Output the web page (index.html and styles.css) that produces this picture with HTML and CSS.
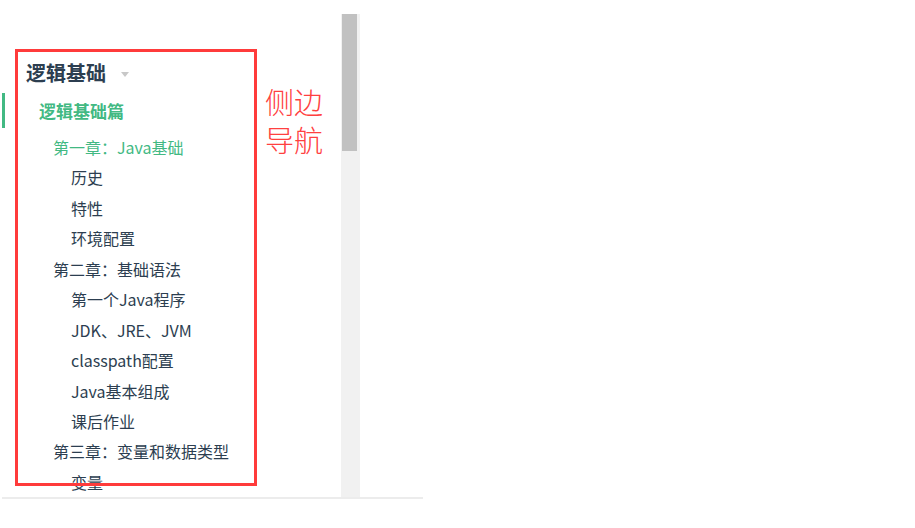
FILE: index.html
```html
<!DOCTYPE html>
<html lang="zh">
<head>
<meta charset="utf-8">
<title>侧边导航</title>
<link rel="stylesheet" href="styles.css">
</head>
<body>
<div class="frame">
  <nav class="sidebar">
    <div class="group-title">逻辑基础<span class="arrow"></span></div>
    <a class="group-link active">逻辑基础篇</a>
    <ul class="nav-list">
      <li class="chapter current">第一章：Java基础</li>
      <li class="item">历史</li>
      <li class="item">特性</li>
      <li class="item">环境配置</li>
      <li class="chapter">第二章：基础语法</li>
      <li class="item">第一个Java程序</li>
      <li class="item">JDK、JRE、JVM</li>
      <li class="item">classpath配置</li>
      <li class="item">Java基本组成</li>
      <li class="item">课后作业</li>
      <li class="chapter">第三章：变量和数据类型</li>
      <li class="item">变量</li>
    </ul>
  </nav>
  <div class="scrollbar"><div class="thumb"></div></div>
</div>
<div class="annotation-box"></div>
<div class="annotation-text">侧边<br>导航</div>
</body>
</html>
```

FILE: styles.css
```css
html, body {
  margin: 0;
  padding: 0;
  background: #fff;
}
body {
  font-family: "Noto Sans CJK SC", "Noto Sans", sans-serif;
  color: #2c3e50;
  position: relative;
  width: 915px;
  height: 528px;
  overflow: hidden;
}
.frame {
  margin: 14px 0 0 2px;
  width: 421px;
  height: 483px;
  border-bottom: 2px solid #ececec;
  display: flex;
}
.sidebar {
  width: 339px;
  height: 483px;
  overflow: hidden;
  padding-top: 44px;
  box-sizing: border-box;
}
.scrollbar {
  width: 19px;
  height: 483px;
  background: #f1f1f1;
}
.thumb {
  margin-left: 1px;
  width: 15px;
  height: 137px;
  background: #c1c1c1;
}
.group-title {
  font-size: 20px;
  font-weight: 700;
  line-height: 30px;
  height: 30px;
  padding-left: 24px;
  display: flex;
  align-items: center;
}
.arrow {
  display: inline-block;
  width: 0;
  height: 0;
  border-left: 4px solid transparent;
  border-right: 4px solid transparent;
  border-top: 5px solid #c8c8c8;
  margin-left: 15px;
  margin-top: 3px;
}
.group-link {
  display: block;
  margin-top: 5px;
  height: 35px;
  line-height: 35px;
  border-left: 3px solid #42b983;
  padding-left: 34px;
  font-size: 17px;
  font-weight: 700;
  color: #42b983;
}
.nav-list {
  list-style: none;
  margin: 4px 0 0;
  padding: 0;
}
.nav-list li {
  font-size: 16px;
  line-height: 30.45px;
  height: 30.45px;
  white-space: nowrap;
}
.chapter {
  padding-left: 51px;
}
.item {
  padding-left: 69px;
}
.chapter.current {
  color: #42b983;
}
.annotation-box {
  position: absolute;
  left: 15px;
  top: 49px;
  width: 242px;
  height: 437px;
  box-sizing: border-box;
  border: 3px solid #ff3b3b;
}
.annotation-text {
  position: absolute;
  left: 265px;
  top: 82px;
  font-size: 29px;
  line-height: 38px;
  color: #ff4040;
  font-weight: 300;
}
```
